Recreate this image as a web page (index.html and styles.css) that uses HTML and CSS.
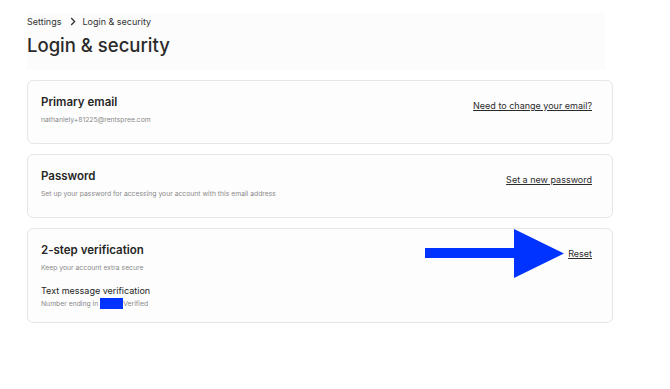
FILE: index.html
```html
<!DOCTYPE html>
<html lang="en">
<head>
<meta charset="utf-8">
<title>Login &amp; security</title>
<link rel="stylesheet" href="styles.css">
</head>
<body>
<main class="page">
  <header class="head">
    <nav class="crumbs">
      <span>Settings</span>
      <svg class="chev" width="6" height="9" viewBox="0 0 6 9"><path d="M1.2 1 L4.6 4.5 L1.2 8" fill="none" stroke="#333" stroke-width="1.3"/></svg>
      <span>Login &amp; security</span>
    </nav>
    <h1 class="h1">Login &amp; security</h1>
  </header>

  <section class="card">
    <div class="info">
      <div class="title">Primary email</div>
      <div class="desc">nathaniely+81225@rentspree.com</div>
    </div>
    <a class="link" href="#">Need to change your email?</a>
  </section>

  <section class="card">
    <div class="info">
      <div class="title">Password</div>
      <div class="desc">Set up your password for accessing your account with this email address</div>
    </div>
    <a class="link" href="#">Set a new password</a>
  </section>

  <section class="card card-2fa">
    <div class="info">
      <div class="title">2-step verification</div>
      <div class="desc">Keep your account extra secure</div>
      <div class="sub">Text message verification</div>
      <div class="desc desc-tight">Number ending in <span class="redact"></span>Verified</div>
    </div>
    <a class="link" href="#">Reset</a>
    <svg class="arrow" width="140" height="50" viewBox="0 0 140 50"><polygon points="0,19 89,19 89,0 139,24.5 89,49 89,29 0,29" fill="#0033ff"/></svg>
  </section>
</main>
</body>
</html>
```
FILE: styles.css
```css
* { box-sizing: border-box; }
html, body { margin: 0; background: #ffffff; }
body {
  font-family: Inter, "Noto Sans", "Liberation Sans", sans-serif;
  color: #2b2b2b;
}
.page {
  width: 586px;
  margin-left: 27px;
  padding-top: 13px;
  display: flex;
  flex-direction: column;
  gap: 10px;
}
.head {
  width: 578px;
  background: #fcfcfc;
  padding: 2px 0 12px 0;
}
.crumbs {
  display: flex;
  align-items: center;
  gap: 5px;
  font-size: 9px;
  line-height: 13px;
  color: #333;
}
.chev { margin: 0 1px 0 4px; }
.h1 {
  margin: 4px 0 0 0;
  font-size: 18.5px;
  line-height: 26px;
  font-weight: 500;
  color: #2a2a2a;
}
.card {
  position: relative;
  border: 1px solid #e6e6e6;
  border-radius: 6px;
  background: #fdfdfd;
  padding: 13px 20px 18px 13px;
  display: flex;
  justify-content: space-between;
  align-items: flex-start;
}
.card-2fa { padding-bottom: 13px; }
.title {
  font-size: 11.5px;
  line-height: 16px;
  font-weight: 600;
  color: #262626;
}
.desc {
  margin-top: 5px;
  font-size: 6.8px;
  line-height: 10px;
  color: #8a8a8a;
  display: flex;
  align-items: center;
}
.sub {
  margin-top: 11px;
  font-size: 9px;
  line-height: 13px;
  color: #262626;
}
.desc-tight { margin-top: 1px; height: 11px; }
.redact {
  display: inline-block;
  width: 23px;
  height: 11px;
  background: #0033ff;
  margin-left: 2px;
}
.link {
  margin-top: 5px;
  font-size: 9px;
  line-height: 13px;
  color: #2b2b2b;
  text-decoration: underline;
}
.arrow {
  position: absolute;
  left: 397px;
  top: 0;
}
```
